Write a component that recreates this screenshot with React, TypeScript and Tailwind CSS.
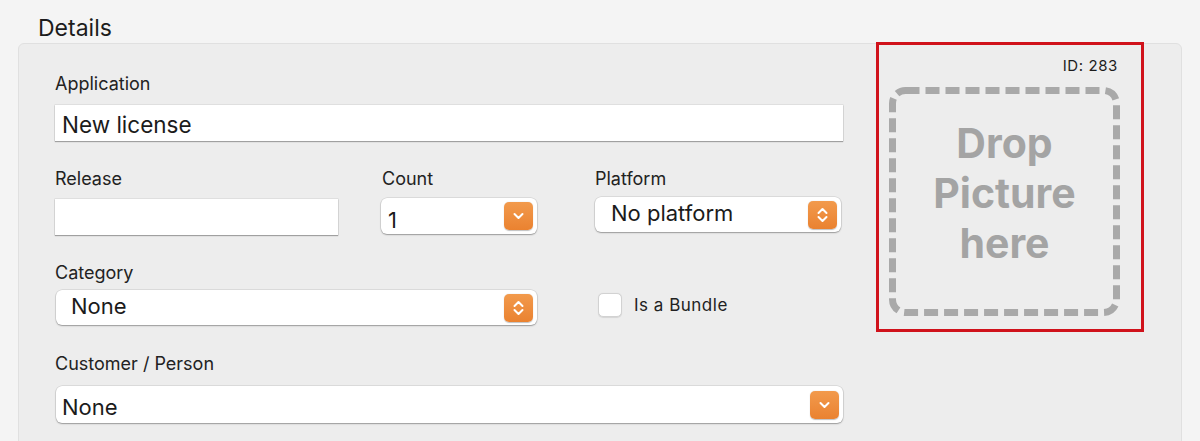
import React from 'react'

const font = { fontFamily: 'Inter, "Noto Sans", sans-serif' }

function ChevronDown() {
  return (
    <svg width="11" height="8" viewBox="0 0 11 8">
      <polyline points="1.5,2 5.5,6 9.5,2" fill="none" stroke="white" strokeWidth="2" strokeLinecap="round" strokeLinejoin="round" />
    </svg>
  )
}

function ChevronUpDown() {
  return (
    <svg width="11" height="18" viewBox="0 0 11 18">
      <polyline points="1.5,7 5.5,3 9.5,7" fill="none" stroke="white" strokeWidth="2" strokeLinecap="round" strokeLinejoin="round" />
      <polyline points="1.5,11 5.5,15 9.5,11" fill="none" stroke="white" strokeWidth="2" strokeLinecap="round" strokeLinejoin="round" />
    </svg>
  )
}

function OrangeButton({ double }: { double?: boolean }) {
  return (
    <div className="w-[29px] h-[28px] rounded-[5px] bg-gradient-to-b from-[#f29a4c] to-[#ea8230] flex items-center justify-center shadow-[0_0.5px_1px_rgba(0,0,0,0.25)]">
      {double ? <ChevronUpDown /> : <ChevronDown />}
    </div>
  )
}

function Popup({
  value,
  width,
  height = 36,
  textInset,
  textShift = '',
  double,
}: {
  value: string
  width: string
  height?: number
  textInset: string
  textShift?: string
  double?: boolean
}) {
  return (
    <div
      className={`${width} bg-white rounded-[6px] flex items-center justify-between pr-[4px] shadow-[0_0_0_0.5px_rgba(0,0,0,0.14),0_1px_1.5px_rgba(0,0,0,0.3)]`}
      style={{ height }}
    >
      <span className={`${textInset} ${textShift} text-[22px] leading-[26px] text-[#1b1b1b]`}>{value}</span>
      <OrangeButton double={double} />
    </div>
  )
}

function Label({ children }: { children: React.ReactNode }) {
  return <div className="text-[18px] leading-[22px] text-[#222]">{children}</div>
}

export default function App() {
  return (
    <div className="w-[1200px] h-[441px] overflow-hidden bg-[#f4f4f4] pt-[15px]" style={font}>
      <div className="pl-[38px] text-[23px] leading-[26px] text-[#1c1c1c]">Details</div>

      <div className="mt-[2px] ml-[18px] w-[1164px] h-[420px] rounded-[6px] border border-[#e0e0e0] bg-[#ededed] flex">
        {/* Left column: form fields */}
        <div className="w-[824px] pl-[36px] pt-[29px]">
          <Label>Application</Label>
          <div className="mt-[10px] w-[788px] h-[36px] bg-white flex items-center pl-[7px] shadow-[0_0_0_0.5px_rgba(0,0,0,0.12),0_1px_1px_rgba(0,0,0,0.28)]">
            <span className="text-[22.5px] leading-[26px] text-[#1b1b1b] pt-[3px]">New license</span>
          </div>

          <div className="mt-[27px] flex">
            <div className="w-[283px]">
              <Label>Release</Label>
              <div className="mt-[9px] w-[283px] h-[36px] bg-white shadow-[0_0_0_0.5px_rgba(0,0,0,0.12),0_1px_1px_rgba(0,0,0,0.28)]" />
            </div>
            <div className="ml-[43px] w-[156px]">
              <div className="pl-[1px]">
                <Label>Count</Label>
              </div>
              <div className="mt-[8px]">
                <Popup value="1" width="w-[156px]" textInset="pl-[7px]" textShift="pt-[7px]" />
              </div>
            </div>
            <div className="ml-[58px] w-[246px]">
              <Label>Platform</Label>
              <div className="mt-[7px]">
                <Popup value="No platform" width="w-[246px]" height={35} textInset="pl-[16px]" textShift="-mt-[3px]" double />
              </div>
            </div>
          </div>

          <div className="mt-[27px] flex">
            <div className="w-[482px]">
              <Label>Category</Label>
              <div className="mt-[6px] ml-[1px]">
                <Popup value="None" width="w-[481px]" height={35} textInset="pl-[15px]" textShift="-mt-[3px]" double />
              </div>
            </div>
            <div className="ml-[61px] mt-[31px] flex items-center h-[24px]">
              <div className="w-[24px] h-[24px] rounded-[5px] bg-white border border-[#d2d2d2] shadow-[0_0.5px_1px_rgba(0,0,0,0.1)]" />
              <span className="ml-[12px] text-[17px] tracking-[0.5px] leading-[22px] text-[#222]">Is a Bundle</span>
            </div>
          </div>

          <div className="mt-[28px]">
            <Label>Customer / Person</Label>
            <div className="mt-[11px] ml-[1px]">
              <Popup value="None" width="w-[787px]" height={37} textInset="pl-[6px]" textShift="pt-[4px]" />
            </div>
          </div>
        </div>

        {/* Right column: picture drop area */}
        <div className="ml-[33px] -mt-[2px] w-[268px] h-[290px] border-[3px] border-[#d0121b]">
          <div className="pt-[12px] pr-[23px] flex justify-end text-[15px] leading-[18px] tracking-[0.6px] text-[#1c1c1c]">
            ID: 283
          </div>
          <div className="relative mt-[12px] ml-[10px] w-[231px] h-[229px]">
            <svg className="absolute inset-0" width="231" height="229" viewBox="0 0 231 229">
              <rect
                x="3.5"
                y="3.5"
                width="224"
                height="222"
                rx="13"
                fill="none"
                stroke="#a9a9a9"
                strokeWidth="7"
                strokeDasharray="14 6"
              />
            </svg>
            <div className="relative pt-[31px] text-center text-[41px] leading-[50px] font-bold text-[#a4a4a4]">
              <div>Drop</div>
              <div>Picture</div>
              <div>here</div>
            </div>
          </div>
        </div>
      </div>
    </div>
  )
}
